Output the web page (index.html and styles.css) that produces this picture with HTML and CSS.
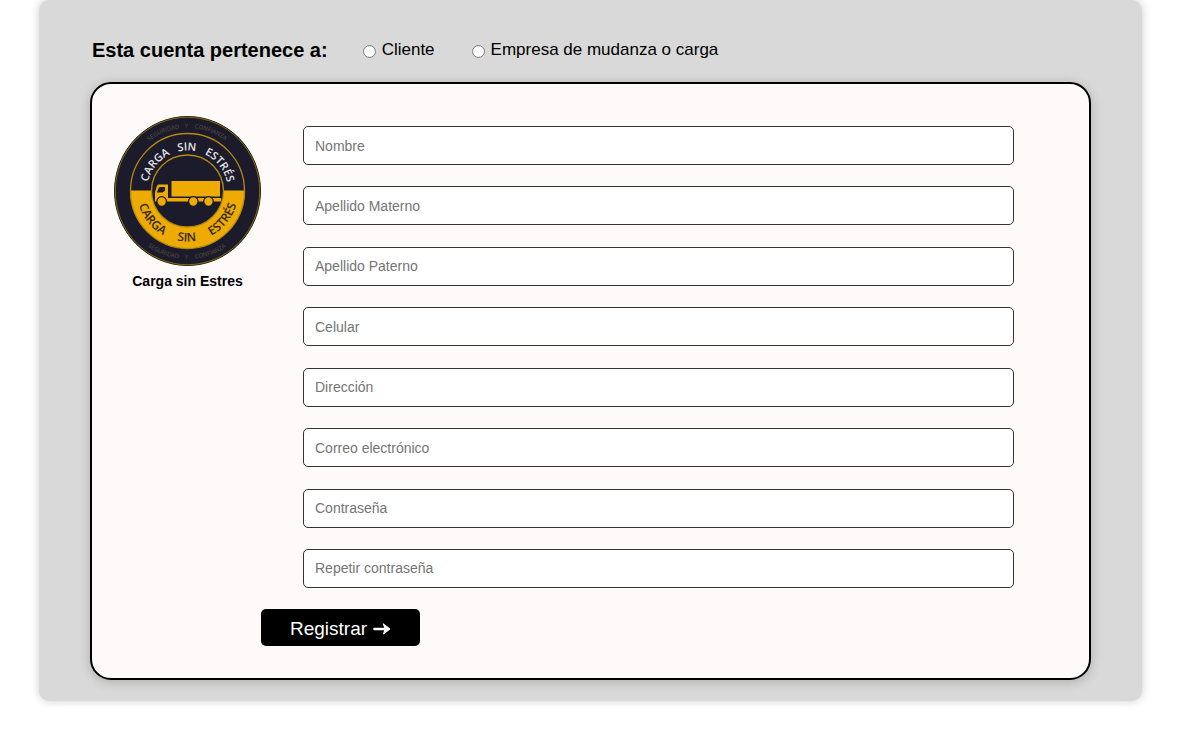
FILE: index.html
```html
<!DOCTYPE html>
<html lang="es">
<head>
<meta charset="utf-8">
<meta name="viewport" content="width=device-width, initial-scale=1">
<title>Carga sin Estres</title>
<link rel="stylesheet" href="styles.css">
</head>
<body>
<main class="panel">
  <form class="signup">
    <div class="account" role="radiogroup" aria-labelledby="account-title">
      <h1 class="account-title" id="account-title">Esta cuenta pertenece a:</h1>
      <label class="option" for="cliente"><input type="radio" name="cuenta" id="cliente">Cliente</label>
      <label class="option" for="empresa"><input type="radio" name="cuenta" id="empresa">Empresa de mudanza o carga</label>
    </div>
    <div class="card">
      <div class="brand">
        <svg class="logo" viewBox="0 0 147 150" aria-hidden="true">
          <defs>
            <path id="top-small" d="M10.500 75A63 63 0 0 1 136.500 75"/>
            <path id="top-large" d="M33 75A40.500 40.500 0 0 1 114 75"/>
            <path id="low-large" d="M23 75A50.500 50.500 0 0 0 124 75"/>
            <path id="low-small" d="M5.500 75A68 68 0 0 0 141.500 75"/>
          </defs>
          <ellipse class="navy gold-line" cx="73.5" cy="75" rx="73" ry="74.5"/>
          <ellipse class="thin-line" cx="73.5" cy="75" rx="72.2" ry="73.7"/>
          <path class="gold" d="M16 74.500H131A57.500 58 0 0 1 16 74.500Z"/>
          <ellipse class="ring" cx="73.500" cy="75" rx="57" ry="57.500"/>
          <circle class="navy ring" cx="73.500" cy="75" r="36"/>
          <g class="small">
            <text><textPath href="#top-small" startOffset="37.500%">SEGURIDAD</textPath></text>
            <text><textPath href="#top-small" startOffset="49.500%">Y</textPath></text>
            <text><textPath href="#top-small" startOffset="62%">CONFIANZA</textPath></text>
            <text><textPath href="#low-small" startOffset="38%">SEGURIDAD</textPath></text>
            <text><textPath href="#low-small" startOffset="49.500%">Y</textPath></text>
            <text><textPath href="#low-small" startOffset="61.500%">CONFIANZA</textPath></text>
          </g>
          <g class="large light">
            <text><textPath href="#top-large" startOffset="21.500%">CARGA</textPath></text>
            <text><textPath href="#top-large" startOffset="49.500%">SIN</textPath></text>
            <text><textPath href="#top-large" startOffset="78.500%">ESTRÉS</textPath></text>
          </g>
          <g class="large dark">
            <text><textPath href="#low-large" startOffset="21.500%">CARGA</textPath></text>
            <text><textPath href="#low-large" startOffset="49.500%">SIN</textPath></text>
            <text><textPath href="#low-large" startOffset="78.500%">ESTRÉS</textPath></text>
          </g>
          <path class="gold" d="M57.500 65H106V80.500H57.500ZM44.500 68.500H54V82H107V85.500H41V76L43 70Q43.500 68.500 44.500 68.500Z"/>
          <path class="navy" d="M43 76L45 71.500Q45.300 71 46 71H51V74.500L48.500 76.500H43Z"/>
          <g class="wheel">
            <circle cx="47.700" cy="85.500" r="4.800"/>
            <circle cx="79.300" cy="85.500" r="4.800"/>
            <circle cx="94.500" cy="85.500" r="4.800"/>
          </g>
        </svg>
        <p class="brand-name">Carga sin Estres</p>
      </div>
      <div class="body">
        <div class="fields">
          <input class="field" type="text" placeholder="Nombre" aria-label="Nombre">
          <input class="field" type="text" placeholder="Apellido Materno" aria-label="Apellido Materno">
          <input class="field" type="text" placeholder="Apellido Paterno" aria-label="Apellido Paterno">
          <input class="field" type="tel" placeholder="Celular" aria-label="Celular">
          <input class="field" type="text" placeholder="Dirección" aria-label="Dirección">
          <input class="field" type="email" placeholder="Correo electrónico" aria-label="Correo electrónico">
          <input class="field" type="password" placeholder="Contraseña" aria-label="Contraseña">
          <input class="field" type="password" placeholder="Repetir contraseña" aria-label="Repetir contraseña">
        </div>
        <button class="submit" type="submit">Registrar
          <svg class="arrow" viewBox="0 0 18 14" aria-hidden="true"><path d="M1.500 7H14"/><path class="arrow-head" d="M10.500 2L17 7L10.500 12L12 7Z"/></svg>
        </button>
      </div>
    </div>
  </form>
</main>
</body>
</html>
```
FILE: styles.css
```css
* {
  box-sizing: border-box;
}

body {
  margin: 0;
  background: #fff;
  color: #000;
  font-family: "Liberation Sans", Arial, sans-serif;
}

.panel {
  margin: 0 37px 29px 39px;
  padding: 38px 51px 21px;
  border-radius: 10px;
  background: #d9d9d9;
  box-shadow: 0 0 10px rgba(0, 0, 0, 0.2);
}

.account {
  display: flex;
  align-items: center;
  height: 24px;
  margin-bottom: 20px;
  padding-left: 2px;
}

.account-title {
  margin: 0 35px 0 0;
  font-size: 20px;
  line-height: 24px;
}

.option {
  display: flex;
  align-items: center;
  gap: 6px;
  margin-right: 37px;
  font-size: 17px;
  line-height: 26px;
}

.option input {
  width: 13px;
  height: 13px;
  margin: 3px 0 0;
}

.card {
  display: flex;
  padding: 32px 75px 32px 22px;
  border: 2px solid #000;
  border-radius: 21px;
  background: #fffafa;
  box-shadow: 0 2px 12px rgba(0, 0, 0, 0.2);
}

.brand {
  flex: none;
  width: 147px;
  text-align: center;
}

.logo {
  display: block;
  width: 147px;
  height: 150px;
}

.brand-name {
  margin: 7px 0 0;
  font-size: 14px;
  font-weight: bold;
  line-height: 16px;
}

.body {
  flex: 1;
  padding-top: 10px;
}

.fields {
  display: flex;
  flex-direction: column;
  justify-content: space-between;
  min-height: 462px;
  margin: 0 0 21px 42px;
}

.field {
  width: 100%;
  height: 39px;
  padding: 0 11px;
  border: 1px solid #333;
  border-radius: 5px;
  background: #fff;
  font: 14px "Liberation Sans", Arial, sans-serif;
}

.field::placeholder {
  color: #757575;
}

.submit {
  display: flex;
  align-items: center;
  gap: 6px;
  height: 37px;
  padding: 3px 29px 0;
  border: 0;
  border-radius: 5px;
  background: #000;
  color: #fff;
  font: 19px "Liberation Sans", Arial, sans-serif;
}

.arrow {
  width: 18px;
  height: 14px;
  fill: none;
  stroke: #fff;
  stroke-width: 2.6;
  stroke-linecap: round;
  stroke-linejoin: round;
}

.arrow-head {
  fill: #fff;
  stroke-width: 1;
}

.navy {
  fill: #1c1b2b;
}

.gold {
  fill: #edab04;
}

.gold-line {
  stroke: #25200f;
}

.thin-line {
  fill: none;
  stroke: #82690f;
}

.ring {
  stroke: #b58a10;
  stroke-width: 1.3;
}

.ring:not(.navy) {
  fill: none;
}

.small,
.large {
  font-family: "Open Sans", sans-serif;
  text-anchor: middle;
}

.small {
  fill: #5d543f;
  font-size: 6px;
}

.large {
  font-size: 11px;
  font-weight: 600;
}

.light {
  fill: #e4e3ea;
}

.dark {
  fill: #33280f;
  font-size: 12px;
}

.wheel {
  fill: #edab04;
  stroke: #1c1b2b;
  stroke-width: 1.3;
}
```
